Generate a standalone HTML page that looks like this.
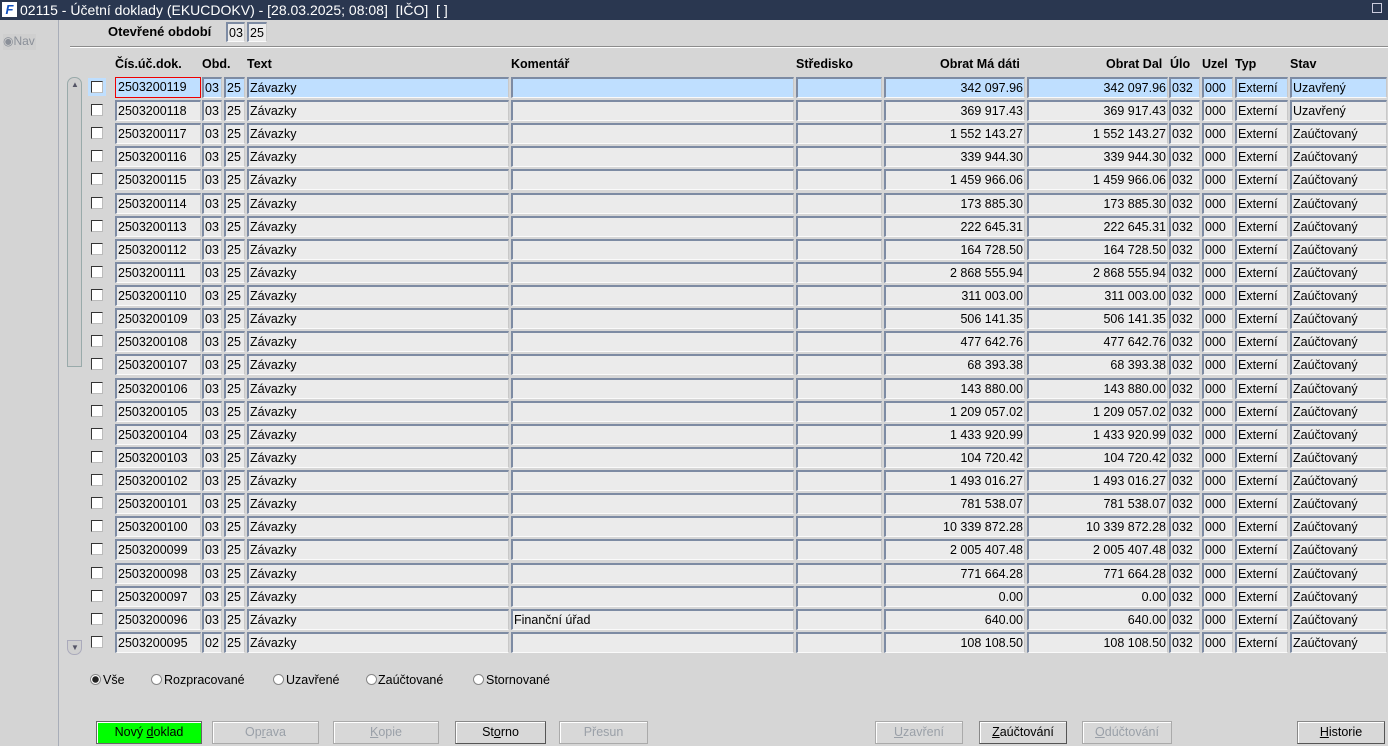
<!DOCTYPE html>
<html><head><meta charset="utf-8">
<style>
*{box-sizing:border-box;margin:0;padding:0}
body{width:1388px;height:746px;overflow:hidden;background:#d6d6d6;font-family:"Liberation Sans",Arial,sans-serif;font-size:12.5px;color:#000;position:relative}
.abs{position:absolute}
#title{left:0;top:0;width:1388px;height:20px;background:#2a3750;color:#fff;font-size:14px;line-height:20px;padding-left:20px;white-space:nowrap}
#logo{left:2px;top:2px;width:15px;height:15px;background:#fff;color:#1050c0;font-weight:bold;font-style:italic;font-size:13px;line-height:15px;text-align:center}
#left{left:0;top:20px;width:59px;height:726px;background:#d4d4d4;border-right:1px solid #a8adb8}
.hdr{font-weight:bold;position:absolute;top:57px}
.row{position:absolute;left:0;width:1388px;height:21px}
.c{position:absolute;top:0;height:21px;background:#ebebeb;border-top:2px solid #7d8ba3;border-left:2px solid #7d8ba3;border-bottom:1px solid #fafafa;border-right:1px solid #c8c8c8;line-height:19px;padding:0 1px;white-space:nowrap;overflow:hidden}
.sel .c{background:#bfdfff}
.r{text-align:right}
.cb{position:absolute;top:4px;left:91px;width:12px;height:12px;background:#fff;border-top:1px solid #333;border-left:1px solid #333;border-right:1px solid #bbb;border-bottom:1px solid #bbb}
.c1{left:115px;width:86px}.c2{left:202px;width:20px}.c3{left:224px;width:21px}.c4{left:247px;width:262px}.c5{left:511px;width:283px}.c6{left:796px;width:86px}.c7{left:884px;width:141px}.c8{left:1027px;width:141px}.c9{left:1169px;width:31px}.c10{left:1202px;width:31px}.c11{left:1235px;width:53px}.c12{left:1290px;width:97px}
.btn{position:absolute;top:721px;height:23px;border:1px solid #888;border-right-color:#555;border-bottom-color:#555;background:#d8d8d8;text-align:center;line-height:21px;box-shadow:inset 1px 1px 0 #fff}
.dis{color:#9aa0a8;border-color:#aaa}
.rad{position:absolute;top:674px;width:11px;height:11px;border-radius:50%;background:#fff;border:1px solid #888}
.rl{position:absolute;top:673px}
</style></head><body>
<div id="title" class="abs">02115 - Účetní doklady (EKUCDOKV) - [28.03.2025; 08:08]&nbsp; [IČO]&nbsp; [ ]</div>
<div id="logo" class="abs">F</div>
<div class="abs" style="right:6px;top:3px;width:10px;height:10px;border:1px solid #ccd;"></div>
<div id="left" class="abs"></div>
<div class="abs" style="left:3px;top:34px;width:33px;height:16px;background:#cfcfcf;color:#8a8f98;font-size:12px;line-height:14px">◉Nav</div>

<div class="abs" style="left:108px;top:24px;font-weight:bold;font-size:13px">Otevřené období</div>
<div class="abs c" style="left:226px;top:22px;width:19px;height:20px">03</div>
<div class="abs c" style="left:247px;top:22px;width:20px;height:20px">25</div>
<div class="abs" style="left:70px;top:46px;width:1318px;height:1px;background:#8c8c8c"></div>
<div class="abs" style="left:70px;top:47px;width:1318px;height:1px;background:#fff"></div>

<div class="hdr" style="left:115px">Čís.úč.dok.</div>
<div class="hdr" style="left:202px">Obd.</div>
<div class="hdr" style="left:247px">Text</div>
<div class="hdr" style="left:511px">Komentář</div>
<div class="hdr" style="left:796px">Středisko</div>
<div class="hdr" style="left:940px">Obrat Má dáti</div>
<div class="hdr" style="left:1106px">Obrat Dal</div>
<div class="hdr" style="left:1170px">Úlo</div>
<div class="hdr" style="left:1202px">Uzel</div>
<div class="hdr" style="left:1235px">Typ</div>
<div class="hdr" style="left:1290px">Stav</div>

<div class="abs" style="left:67px;top:77px;width:15px;height:290px;border:1px solid #9aa;border-radius:7px 7px 0 0;background:#d0d0d0"></div>
<div class="abs" style="left:71px;top:80px;font-size:8px;color:#556">▲</div>
<div class="abs" style="left:67px;top:640px;width:15px;height:15px;border:1px solid #aab;border-radius:0 0 7px 7px;background:#d0d0d0"></div>
<div class="abs" style="left:71px;top:643px;font-size:8px;color:#556">▼</div>

<div class="row sel" style="top:77px"><div class="cb" style="outline:3px solid #bfdfff"></div><div class="c c1" style="border:1px solid #e00;background:#bfdfff;padding-left:2px">2503200119</div><div class="c c2">03</div><div class="c c3">25</div><div class="c c4">Závazky</div><div class="c c5"></div><div class="c c6"></div><div class="c c7 r">342 097.96</div><div class="c c8 r">342 097.96</div><div class="c c9">032</div><div class="c c10">000</div><div class="c c11">Externí</div><div class="c c12">Uzavřený</div></div>
<div class="row" style="top:100px"><div class="cb"></div><div class="c c1">2503200118</div><div class="c c2">03</div><div class="c c3">25</div><div class="c c4">Závazky</div><div class="c c5"></div><div class="c c6"></div><div class="c c7 r">369 917.43</div><div class="c c8 r">369 917.43</div><div class="c c9">032</div><div class="c c10">000</div><div class="c c11">Externí</div><div class="c c12">Uzavřený</div></div>
<div class="row" style="top:123px"><div class="cb"></div><div class="c c1">2503200117</div><div class="c c2">03</div><div class="c c3">25</div><div class="c c4">Závazky</div><div class="c c5"></div><div class="c c6"></div><div class="c c7 r">1 552 143.27</div><div class="c c8 r">1 552 143.27</div><div class="c c9">032</div><div class="c c10">000</div><div class="c c11">Externí</div><div class="c c12">Zaúčtovaný</div></div>
<div class="row" style="top:146px"><div class="cb"></div><div class="c c1">2503200116</div><div class="c c2">03</div><div class="c c3">25</div><div class="c c4">Závazky</div><div class="c c5"></div><div class="c c6"></div><div class="c c7 r">339 944.30</div><div class="c c8 r">339 944.30</div><div class="c c9">032</div><div class="c c10">000</div><div class="c c11">Externí</div><div class="c c12">Zaúčtovaný</div></div>
<div class="row" style="top:169px"><div class="cb"></div><div class="c c1">2503200115</div><div class="c c2">03</div><div class="c c3">25</div><div class="c c4">Závazky</div><div class="c c5"></div><div class="c c6"></div><div class="c c7 r">1 459 966.06</div><div class="c c8 r">1 459 966.06</div><div class="c c9">032</div><div class="c c10">000</div><div class="c c11">Externí</div><div class="c c12">Zaúčtovaný</div></div>
<div class="row" style="top:193px"><div class="cb"></div><div class="c c1">2503200114</div><div class="c c2">03</div><div class="c c3">25</div><div class="c c4">Závazky</div><div class="c c5"></div><div class="c c6"></div><div class="c c7 r">173 885.30</div><div class="c c8 r">173 885.30</div><div class="c c9">032</div><div class="c c10">000</div><div class="c c11">Externí</div><div class="c c12">Zaúčtovaný</div></div>
<div class="row" style="top:216px"><div class="cb"></div><div class="c c1">2503200113</div><div class="c c2">03</div><div class="c c3">25</div><div class="c c4">Závazky</div><div class="c c5"></div><div class="c c6"></div><div class="c c7 r">222 645.31</div><div class="c c8 r">222 645.31</div><div class="c c9">032</div><div class="c c10">000</div><div class="c c11">Externí</div><div class="c c12">Zaúčtovaný</div></div>
<div class="row" style="top:239px"><div class="cb"></div><div class="c c1">2503200112</div><div class="c c2">03</div><div class="c c3">25</div><div class="c c4">Závazky</div><div class="c c5"></div><div class="c c6"></div><div class="c c7 r">164 728.50</div><div class="c c8 r">164 728.50</div><div class="c c9">032</div><div class="c c10">000</div><div class="c c11">Externí</div><div class="c c12">Zaúčtovaný</div></div>
<div class="row" style="top:262px"><div class="cb"></div><div class="c c1">2503200111</div><div class="c c2">03</div><div class="c c3">25</div><div class="c c4">Závazky</div><div class="c c5"></div><div class="c c6"></div><div class="c c7 r">2 868 555.94</div><div class="c c8 r">2 868 555.94</div><div class="c c9">032</div><div class="c c10">000</div><div class="c c11">Externí</div><div class="c c12">Zaúčtovaný</div></div>
<div class="row" style="top:285px"><div class="cb"></div><div class="c c1">2503200110</div><div class="c c2">03</div><div class="c c3">25</div><div class="c c4">Závazky</div><div class="c c5"></div><div class="c c6"></div><div class="c c7 r">311 003.00</div><div class="c c8 r">311 003.00</div><div class="c c9">032</div><div class="c c10">000</div><div class="c c11">Externí</div><div class="c c12">Zaúčtovaný</div></div>
<div class="row" style="top:308px"><div class="cb"></div><div class="c c1">2503200109</div><div class="c c2">03</div><div class="c c3">25</div><div class="c c4">Závazky</div><div class="c c5"></div><div class="c c6"></div><div class="c c7 r">506 141.35</div><div class="c c8 r">506 141.35</div><div class="c c9">032</div><div class="c c10">000</div><div class="c c11">Externí</div><div class="c c12">Zaúčtovaný</div></div>
<div class="row" style="top:331px"><div class="cb"></div><div class="c c1">2503200108</div><div class="c c2">03</div><div class="c c3">25</div><div class="c c4">Závazky</div><div class="c c5"></div><div class="c c6"></div><div class="c c7 r">477 642.76</div><div class="c c8 r">477 642.76</div><div class="c c9">032</div><div class="c c10">000</div><div class="c c11">Externí</div><div class="c c12">Zaúčtovaný</div></div>
<div class="row" style="top:354px"><div class="cb"></div><div class="c c1">2503200107</div><div class="c c2">03</div><div class="c c3">25</div><div class="c c4">Závazky</div><div class="c c5"></div><div class="c c6"></div><div class="c c7 r">68 393.38</div><div class="c c8 r">68 393.38</div><div class="c c9">032</div><div class="c c10">000</div><div class="c c11">Externí</div><div class="c c12">Zaúčtovaný</div></div>
<div class="row" style="top:378px"><div class="cb"></div><div class="c c1">2503200106</div><div class="c c2">03</div><div class="c c3">25</div><div class="c c4">Závazky</div><div class="c c5"></div><div class="c c6"></div><div class="c c7 r">143 880.00</div><div class="c c8 r">143 880.00</div><div class="c c9">032</div><div class="c c10">000</div><div class="c c11">Externí</div><div class="c c12">Zaúčtovaný</div></div>
<div class="row" style="top:401px"><div class="cb"></div><div class="c c1">2503200105</div><div class="c c2">03</div><div class="c c3">25</div><div class="c c4">Závazky</div><div class="c c5"></div><div class="c c6"></div><div class="c c7 r">1 209 057.02</div><div class="c c8 r">1 209 057.02</div><div class="c c9">032</div><div class="c c10">000</div><div class="c c11">Externí</div><div class="c c12">Zaúčtovaný</div></div>
<div class="row" style="top:424px"><div class="cb"></div><div class="c c1">2503200104</div><div class="c c2">03</div><div class="c c3">25</div><div class="c c4">Závazky</div><div class="c c5"></div><div class="c c6"></div><div class="c c7 r">1 433 920.99</div><div class="c c8 r">1 433 920.99</div><div class="c c9">032</div><div class="c c10">000</div><div class="c c11">Externí</div><div class="c c12">Zaúčtovaný</div></div>
<div class="row" style="top:447px"><div class="cb"></div><div class="c c1">2503200103</div><div class="c c2">03</div><div class="c c3">25</div><div class="c c4">Závazky</div><div class="c c5"></div><div class="c c6"></div><div class="c c7 r">104 720.42</div><div class="c c8 r">104 720.42</div><div class="c c9">032</div><div class="c c10">000</div><div class="c c11">Externí</div><div class="c c12">Zaúčtovaný</div></div>
<div class="row" style="top:470px"><div class="cb"></div><div class="c c1">2503200102</div><div class="c c2">03</div><div class="c c3">25</div><div class="c c4">Závazky</div><div class="c c5"></div><div class="c c6"></div><div class="c c7 r">1 493 016.27</div><div class="c c8 r">1 493 016.27</div><div class="c c9">032</div><div class="c c10">000</div><div class="c c11">Externí</div><div class="c c12">Zaúčtovaný</div></div>
<div class="row" style="top:493px"><div class="cb"></div><div class="c c1">2503200101</div><div class="c c2">03</div><div class="c c3">25</div><div class="c c4">Závazky</div><div class="c c5"></div><div class="c c6"></div><div class="c c7 r">781 538.07</div><div class="c c8 r">781 538.07</div><div class="c c9">032</div><div class="c c10">000</div><div class="c c11">Externí</div><div class="c c12">Zaúčtovaný</div></div>
<div class="row" style="top:516px"><div class="cb"></div><div class="c c1">2503200100</div><div class="c c2">03</div><div class="c c3">25</div><div class="c c4">Závazky</div><div class="c c5"></div><div class="c c6"></div><div class="c c7 r">10 339 872.28</div><div class="c c8 r">10 339 872.28</div><div class="c c9">032</div><div class="c c10">000</div><div class="c c11">Externí</div><div class="c c12">Zaúčtovaný</div></div>
<div class="row" style="top:539px"><div class="cb"></div><div class="c c1">2503200099</div><div class="c c2">03</div><div class="c c3">25</div><div class="c c4">Závazky</div><div class="c c5"></div><div class="c c6"></div><div class="c c7 r">2 005 407.48</div><div class="c c8 r">2 005 407.48</div><div class="c c9">032</div><div class="c c10">000</div><div class="c c11">Externí</div><div class="c c12">Zaúčtovaný</div></div>
<div class="row" style="top:563px"><div class="cb"></div><div class="c c1">2503200098</div><div class="c c2">03</div><div class="c c3">25</div><div class="c c4">Závazky</div><div class="c c5"></div><div class="c c6"></div><div class="c c7 r">771 664.28</div><div class="c c8 r">771 664.28</div><div class="c c9">032</div><div class="c c10">000</div><div class="c c11">Externí</div><div class="c c12">Zaúčtovaný</div></div>
<div class="row" style="top:586px"><div class="cb"></div><div class="c c1">2503200097</div><div class="c c2">03</div><div class="c c3">25</div><div class="c c4">Závazky</div><div class="c c5"></div><div class="c c6"></div><div class="c c7 r">0.00</div><div class="c c8 r">0.00</div><div class="c c9">032</div><div class="c c10">000</div><div class="c c11">Externí</div><div class="c c12">Zaúčtovaný</div></div>
<div class="row" style="top:609px"><div class="cb"></div><div class="c c1">2503200096</div><div class="c c2">03</div><div class="c c3">25</div><div class="c c4">Závazky</div><div class="c c5">Finanční úřad</div><div class="c c6"></div><div class="c c7 r">640.00</div><div class="c c8 r">640.00</div><div class="c c9">032</div><div class="c c10">000</div><div class="c c11">Externí</div><div class="c c12">Zaúčtovaný</div></div>
<div class="row" style="top:632px"><div class="cb"></div><div class="c c1">2503200095</div><div class="c c2">02</div><div class="c c3">25</div><div class="c c4">Závazky</div><div class="c c5"></div><div class="c c6"></div><div class="c c7 r">108 108.50</div><div class="c c8 r">108 108.50</div><div class="c c9">032</div><div class="c c10">000</div><div class="c c11">Externí</div><div class="c c12">Zaúčtovaný</div></div>

<div class="rad" style="left:90px;background:radial-gradient(circle,#222 0 3px,#fff 3.5px)"></div><div class="rl" style="left:103px">Vše</div>
<div class="rad" style="left:151px"></div><div class="rl" style="left:164px">Rozpracované</div>
<div class="rad" style="left:273px"></div><div class="rl" style="left:286px">Uzavřené</div>
<div class="rad" style="left:366px"></div><div class="rl" style="left:378px">Zaúčtované</div>
<div class="rad" style="left:473px"></div><div class="rl" style="left:486px">Stornované</div>

<div class="btn" style="left:96px;width:106px;background:#00ff00;border-color:#666">Nový <u>d</u>oklad</div>
<div class="btn dis" style="left:212px;width:107px">Op<u>r</u>ava</div>
<div class="btn dis" style="left:333px;width:106px"><u>K</u>opie</div>
<div class="btn" style="left:455px;width:91px">St<u>o</u>rno</div>
<div class="btn dis" style="left:559px;width:89px">Přesun</div>
<div class="btn dis" style="left:875px;width:88px"><u>U</u>zavření</div>
<div class="btn" style="left:979px;width:88px"><u>Z</u>aúčtování</div>
<div class="btn dis" style="left:1082px;width:90px"><u>O</u>dúčtování</div>
<div class="btn" style="left:1297px;width:88px"><u>H</u>istorie</div>
</body></html>
